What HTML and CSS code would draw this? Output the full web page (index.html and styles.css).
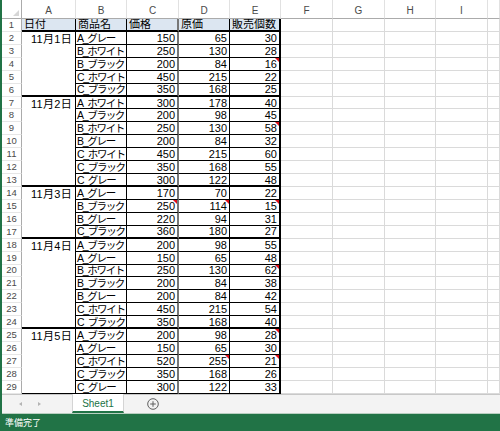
FILE: index.html
```html
<!DOCTYPE html>
<html lang="ja">
<head>
<meta charset="utf-8">
<title>Sheet1</title>
<link rel="stylesheet" href="styles.css">
</head>
<body>
<div class="app">
  <div class="sheet">
    <div class="corner"><span class="tri"></span></div>
    <div class="ch">A</div><div class="ch">B</div><div class="ch">C</div><div class="ch">D</div><div class="ch">E</div><div class="ch">F</div><div class="ch">G</div><div class="ch">H</div><div class="ch">I</div><div class="ch"></div>

    <div class="rh">1</div><div class="d hd">日付</div><div class="d hd">商品名</div><div class="d hd cc">価格</div><div class="d hd">原価</div><div class="d hd ce">販売個数</div><div></div><div></div><div></div><div></div><div></div>

    <div class="rh">2</div><div class="d date s5 end">11月1日</div><div class="d t">A_グレー</div><div class="d n cc">150</div><div class="d n">65</div><div class="d n ce">30</div><div></div><div></div><div></div><div></div><div></div>
    <div class="rh">3</div><div class="d t">B_ホワイト</div><div class="d n cc">250</div><div class="d n">130</div><div class="d n ce">28</div><div></div><div></div><div></div><div></div><div></div>
    <div class="rh">4</div><div class="d t">B_ブラック</div><div class="d n cc">200</div><div class="d n">84</div><div class="d n ce note">16</div><div></div><div></div><div></div><div></div><div></div>
    <div class="rh">5</div><div class="d t">C_ホワイト</div><div class="d n cc">450</div><div class="d n">215</div><div class="d n ce">22</div><div></div><div></div><div></div><div></div><div></div>
    <div class="rh">6</div><div class="d t end">C_ブラック</div><div class="d n cc end">350</div><div class="d n end">168</div><div class="d n ce end">25</div><div></div><div></div><div></div><div></div><div></div>

    <div class="rh">7</div><div class="d date s7 end">11月2日</div><div class="d t">A_ホワイト</div><div class="d n cc">300</div><div class="d n">178</div><div class="d n ce">40</div><div></div><div></div><div></div><div></div><div></div>
    <div class="rh">8</div><div class="d t">A_ブラック</div><div class="d n cc">200</div><div class="d n">98</div><div class="d n ce">45</div><div></div><div></div><div></div><div></div><div></div>
    <div class="rh">9</div><div class="d t">B_ホワイト</div><div class="d n cc">250</div><div class="d n">130</div><div class="d n ce note">58</div><div></div><div></div><div></div><div></div><div></div>
    <div class="rh">10</div><div class="d t">B_グレー</div><div class="d n cc">200</div><div class="d n">84</div><div class="d n ce">32</div><div></div><div></div><div></div><div></div><div></div>
    <div class="rh">11</div><div class="d t">C_ホワイト</div><div class="d n cc">450</div><div class="d n">215</div><div class="d n ce">60</div><div></div><div></div><div></div><div></div><div></div>
    <div class="rh">12</div><div class="d t">C_ブラック</div><div class="d n cc">350</div><div class="d n">168</div><div class="d n ce">55</div><div></div><div></div><div></div><div></div><div></div>
    <div class="rh">13</div><div class="d t end">C_グレー</div><div class="d n cc end">300</div><div class="d n end">122</div><div class="d n ce end">48</div><div></div><div></div><div></div><div></div><div></div>

    <div class="rh">14</div><div class="d date s4 end">11月3日</div><div class="d t">A_グレー</div><div class="d n cc">170</div><div class="d n">70</div><div class="d n ce">22</div><div></div><div></div><div></div><div></div><div></div>
    <div class="rh">15</div><div class="d t">B_ブラック</div><div class="d n cc note">250</div><div class="d n note">114</div><div class="d n ce note">15</div><div></div><div></div><div></div><div></div><div></div>
    <div class="rh">16</div><div class="d t">B_グレー</div><div class="d n cc">220</div><div class="d n">94</div><div class="d n ce">31</div><div></div><div></div><div></div><div></div><div></div>
    <div class="rh">17</div><div class="d t end">C_ブラック</div><div class="d n cc end">360</div><div class="d n end">180</div><div class="d n ce end">27</div><div></div><div></div><div></div><div></div><div></div>

    <div class="rh">18</div><div class="d date s7 end">11月4日</div><div class="d t">A_ブラック</div><div class="d n cc">200</div><div class="d n">98</div><div class="d n ce">55</div><div></div><div></div><div></div><div></div><div></div>
    <div class="rh">19</div><div class="d t">A_グレー</div><div class="d n cc">150</div><div class="d n">65</div><div class="d n ce">48</div><div></div><div></div><div></div><div></div><div></div>
    <div class="rh">20</div><div class="d t">B_ホワイト</div><div class="d n cc">250</div><div class="d n">130</div><div class="d n ce note">62</div><div></div><div></div><div></div><div></div><div></div>
    <div class="rh">21</div><div class="d t">B_ブラック</div><div class="d n cc">200</div><div class="d n">84</div><div class="d n ce">38</div><div></div><div></div><div></div><div></div><div></div>
    <div class="rh">22</div><div class="d t">B_グレー</div><div class="d n cc">200</div><div class="d n">84</div><div class="d n ce">42</div><div></div><div></div><div></div><div></div><div></div>
    <div class="rh">23</div><div class="d t">C_ホワイト</div><div class="d n cc">450</div><div class="d n">215</div><div class="d n ce">54</div><div></div><div></div><div></div><div></div><div></div>
    <div class="rh">24</div><div class="d t end">C_ブラック</div><div class="d n cc end">350</div><div class="d n end">168</div><div class="d n ce end">40</div><div></div><div></div><div></div><div></div><div></div>

    <div class="rh">25</div><div class="d date s5">11月5日</div><div class="d t">A_ブラック</div><div class="d n cc">200</div><div class="d n">98</div><div class="d n ce note">28</div><div></div><div></div><div></div><div></div><div></div>
    <div class="rh">26</div><div class="d t">A_グレー</div><div class="d n cc">150</div><div class="d n">65</div><div class="d n ce">30</div><div></div><div></div><div></div><div></div><div></div>
    <div class="rh">27</div><div class="d t">C_ホワイト</div><div class="d n cc">520</div><div class="d n note">255</div><div class="d n ce note">21</div><div></div><div></div><div></div><div></div><div></div>
    <div class="rh">28</div><div class="d t">C_ブラック</div><div class="d n cc">350</div><div class="d n">168</div><div class="d n ce">26</div><div></div><div></div><div></div><div></div><div></div>
    <div class="rh">29</div><div class="d t">C_グレー</div><div class="d n cc">300</div><div class="d n">122</div><div class="d n ce">33</div><div></div><div></div><div></div><div></div><div></div>
  </div>

  <div class="tabs">
    <div class="nav"><span class="arrow left"></span><span class="arrow right"></span></div>
    <div class="tab">Sheet1</div>
    <div class="add">
      <svg width="12" height="12" viewBox="0 0 12 12"><circle cx="6" cy="6" r="5.3" fill="none" stroke="#5f5f5f" stroke-width="1"/><path d="M6 3.2V8.8M3.2 6H8.8" stroke="#5f5f5f" stroke-width="1"/></svg>
    </div>
  </div>

  <div class="status">準備完了</div>
</div>
</body>
</html>
```

FILE: styles.css
```css
* {
  box-sizing: border-box;
  margin: 0;
  padding: 0;
}

html, body {
  width: 500px;
  height: 431px;
  overflow: hidden;
  background: #fff;
}

body {
  font-family: "Liberation Sans", "Noto Sans CJK JP", sans-serif;
  color: #000;
}

.app {
  display: flex;
  flex-direction: column;
  height: 431px;
  border-left: 2px solid #217346;
}

.sheet {
  display: grid;
  grid-template-columns: 20px 54px 51px 52px 51px 51px 52px 52px 51px 52px 1fr;
  grid-template-rows: 19px repeat(29, 12.93px);
  height: 394px;
  overflow: hidden;
  font-size: 11px;
}

.sheet > * {
  display: flex;
  align-items: center;
  overflow: hidden;
  white-space: nowrap;
  line-height: 12px;
  border-right: 1px solid #dadada;
  border-bottom: 1px solid #dadada;
}

.corner {
  justify-content: flex-end;
  align-items: flex-end;
  padding: 0 2px 2px 0;
  border-right-color: #ababab;
  border-bottom-color: #ababab;
}

.tri {
  width: 0;
  height: 0;
  border-left: 6px solid transparent;
  border-bottom: 6px solid #d6d6d6;
}

.ch {
  justify-content: center;
  padding-top: 3px;
  font-size: 10px;
  color: #4a4a4a;
  border-right-color: #e1e1e1;
  border-bottom-color: #ababab;
}

.rh {
  justify-content: center;
  font-size: 9.5px;
  color: #4a4a4a;
  border-right-color: #ababab;
  border-bottom-color: #e6e6e6;
}

.d {
  border-right-color: #000;
  border-bottom-color: #000;
}

.t {
  padding-left: 1px;
  font-size: 10.5px;
  letter-spacing: -1.3px;
}

.n {
  justify-content: flex-end;
  padding-right: 2px;
}

.hd {
  background: #dce6f1;
  padding-left: 2px;
  border-bottom: 2px solid #000;
}

.date {
  align-items: flex-start;
  justify-content: flex-end;
  padding-right: 3px;
  padding-top: 1px;
  letter-spacing: 0.3px;
}

.s4 { grid-row: span 4; }
.s5 { grid-row: span 5; }
.s7 { grid-row: span 7; }

.end {
  border-bottom: 2px solid #000;
}

.cc {
  border-right: 2px solid #777;
}

.ce {
  border-right: 2px solid #000;
}

.note {
  position: relative;
}

.note::after {
  content: "";
  position: absolute;
  top: 0;
  right: 0;
  border-top: 4px solid #e0101a;
  border-left: 4px solid transparent;
}

.tabs {
  display: flex;
  align-items: stretch;
  height: 19px;
  background: #f3f3f3;
  border-top: 1px solid #c8c8c8;
}

.nav {
  width: 70px;
  display: flex;
  align-items: center;
  gap: 16px;
  padding-left: 17px;
}

.arrow {
  width: 0;
  height: 0;
  border-top: 2.5px solid transparent;
  border-bottom: 2.5px solid transparent;
}

.arrow.left {
  border-right: 3px solid #b4b4b4;
}

.arrow.right {
  border-left: 3px solid #b4b4b4;
}

.tab {
  width: 52px;
  margin-top: -1px;
  display: flex;
  align-items: center;
  justify-content: center;
  background: #fff;
  border-left: 1px solid #d4d4d4;
  border-right: 1px solid #d4d4d4;
  border-bottom: 2px solid #217346;
  font-size: 10px;
  color: #217346;
  padding-top: 1px;
}

.add {
  display: flex;
  align-items: center;
  margin-left: 23px;
}

.add svg {
  display: block;
}

.status {
  flex: 1;
  display: flex;
  align-items: center;
  padding-left: 3px;
  background: #217346;
  border-top: 1px solid #b9cfc1;
  color: #fff;
  font-family: "Noto Sans CJK JP", sans-serif;
  font-size: 9px;
}
```
